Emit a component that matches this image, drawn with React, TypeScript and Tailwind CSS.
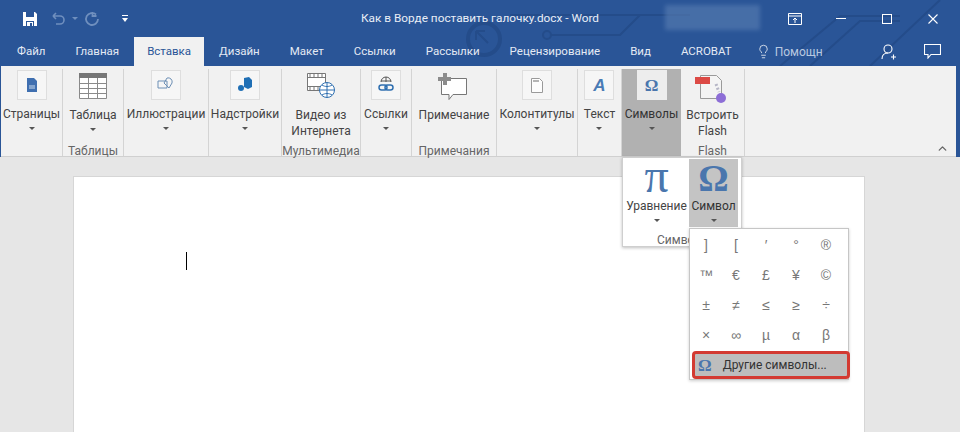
import type { ReactNode } from "react"
import { ChevronUp, Lightbulb } from "lucide-react"

const tabs = ["Файл", "Главная", "Вставка", "Дизайн", "Макет", "Ссылки", "Рассылки", "Рецензирование", "Вид", "ACROBAT"]

const symbols = ["]", "[", "′", "°", "®", "™", "€", "£", "¥", "©", "±", "≠", "≤", "≥", "÷", "×", "∞", "µ", "α", "β"]

function Caret() {
  return <div className="h-0 w-0 border-x-[3px] border-t-[3px] border-x-transparent border-t-[#555]" />
}

function IconBox({ children }: { children: ReactNode }) {
  return (
    <div className="flex h-[30px] w-[30px] items-center justify-center border border-[#dedede] bg-[#f6f6f6]">
      {children}
    </div>
  )
}

function RibbonGroup({ width, label, children }: { width: string; label?: string; children: ReactNode }) {
  return (
    <div className={`relative flex h-[87px] flex-col items-center border-r border-[#d4d4d4] ${width}`}>
      <div className="flex flex-1 flex-col items-center">{children}</div>
      {label && <div className="h-[12px] text-[12px] leading-[15px] text-[#666]">{label}</div>}
    </div>
  )
}

function SmallButton({ label, icon }: { label: string; icon: ReactNode }) {
  return (
    <div className="flex flex-col items-center pt-[1px]">
      <IconBox>{icon}</IconBox>
      <div className="mt-[6px] text-[12px] leading-[16px] whitespace-nowrap text-[#444]">{label}</div>
      <div className="mt-[5px]"><Caret /></div>
    </div>
  )
}

function Omega({ className }: { className: string }) {
  return <span className={`font-['Liberation_Serif',serif] font-bold text-[#4a76ad] ${className}`}>Ω</span>
}

function TitleBar() {
  return (
    <div className="relative grid h-[37px] grid-cols-[1fr_auto_1fr] items-center">
      <div className="flex items-center pl-[22px]">
        <svg width="16" height="16" viewBox="0 0 16 16" fill="none">
          <path d="M1 1h12l2 2v12H1z" fill="#fff" />
          <path d="M4 1h8v5H4zM4 10h8v5H4z" fill="#2a5597" />
          <path d="M5 11h6v4H5z" fill="#fff" />
          <path d="M8 12h2v3H8z" fill="#2a5597" />
        </svg>
        <svg className="ml-[13px]" width="30" height="16" viewBox="0 0 30 16" fill="none" stroke="#6f8fbe" strokeWidth="1.6">
          <path d="M2 5h7a4 4 0 0 1 0 8H5M2 5l3-3M2 5l3 3" />
          <path d="M21 6l3 3 3-3" fill="#6f8fbe" strokeWidth="0" />
        </svg>
        <svg className="ml-[3px]" width="16" height="16" viewBox="0 0 16 16" fill="none" stroke="#6f8fbe" strokeWidth="1.8">
          <path d="M12 3.500A6 6 0 1 0 14 8M8.500 1v4h4" />
        </svg>
        <svg className="ml-[21px]" width="8" height="10" viewBox="0 0 8 10" fill="#fff">
          <path d="M1 1h6v1H1zM1 4h6L4 8z" />
        </svg>
      </div>
      <div className="text-[11.8px] text-[#e9eef6]">Как в Ворде поставить галочку.docx - Word</div>
      <div className="flex items-center justify-end pr-[22px] text-white">
        <svg width="14" height="12" viewBox="0 0 14 12" fill="none" stroke="#fff">
          <path d="M.5.5h13v11H.5zM.5 3h13M7 10V5M5 7l2-2 2 2" />
        </svg>
        <div className="ml-[34px] h-px w-[10px] bg-white" />
        <div className="ml-[36px] h-[10px] w-[10px] border border-white" />
        <svg className="ml-[36px]" width="10" height="10" viewBox="0 0 10 10" stroke="#fff" strokeWidth="1.1">
          <path d="M.5.5l9 9M9.500.5l-9 9" />
        </svg>
      </div>
    </div>
  )
}

function TabBar() {
  return (
    <div className="relative flex h-[29px] items-stretch pl-[2px] text-[11.5px]">
      {tabs.map((tab) => (
        <div
          key={tab}
          className={
            tab === "Вставка"
              ? "flex items-center bg-[#f1f1f1] px-[13px] text-[#2a5597]"
              : "flex items-center px-[15px] text-[#e4eaf4]"
          }
        >
          {tab}
        </div>
      ))}
      <div className="ml-[9px] flex items-center text-[#b9c9e0]">
        <Lightbulb className="h-[15px] w-[15px] text-white" strokeWidth={1.2} />
        <span className="ml-[4px] text-[12px]">Помощн</span>
      </div>
      <div className="ml-auto flex items-center pr-[19px]">
        <svg width="16" height="16" viewBox="0 0 16 16" fill="none" stroke="#fff" strokeWidth="1.1">
          <circle cx="7" cy="5" r="4" />
          <path d="M1 15c0-4 2-6 6-6M10 13h5M12.500 10.500v5" />
        </svg>
        <svg className="ml-[27px]" width="17" height="15" viewBox="0 0 17 15" fill="none" stroke="#fff" strokeWidth="1.1">
          <path d="M.5.5h16v10H7L4 14v-3.500H.5z" />
        </svg>
      </div>
    </div>
  )
}

function Ribbon() {
  return (
    <div className="relative mr-[4px] ml-px flex h-[91px] border-b border-[#d0d0d0] bg-[#f1f1f1] pt-[3px]">
      <RibbonGroup width="w-[62px]">
        <SmallButton
          label="Страницы"
          icon={
            <svg width="14" height="16" viewBox="0 0 14 16">
              <path d="M2 1h7l3 3v11H2z" fill="#3f6fb0" />
              <path d="M4 9h6M4 11h6" stroke="#cde" strokeWidth="1" />
            </svg>
          }
        />
      </RibbonGroup>
      <RibbonGroup width="w-[61px]" label="Таблицы">
        <svg className="mt-[4px]" width="28" height="26" viewBox="0 0 28 26" fill="none" stroke="#8a8a8a">
          <path d="M.5.5h27v25H.5z" fill="#fff" />
          <path d="M0 0h28v5H0z" fill="#777" stroke="none" />
          <path d="M.5 10.500h27M.5 15.500h27M.5 20.500h27M9.500 5v20M18.500 5v20" />
        </svg>
        <div className="mt-[8px] text-[12px] leading-[16px] text-[#444]">Таблица</div>
        <div className="mt-[5px]"><Caret /></div>
      </RibbonGroup>
      <RibbonGroup width="w-[85px]">
        <SmallButton
          label="Иллюстрации"
          icon={
            <svg width="18" height="16" viewBox="0 0 18 16" fill="none" stroke="#6d8fb5">
              <path d="M1 4h9v7H1zM10 1a4 4 0 0 1 5 5l-3 5-5-5z" />
            </svg>
          }
        />
      </RibbonGroup>
      <RibbonGroup width="w-[73px]">
        <SmallButton
          label="Надстройки"
          icon={
            <svg width="16" height="16" viewBox="0 0 16 16" fill="#1f6fb5">
              <path d="M7 1l5-1 3 3v7l-4 2-4-2z" />
              <circle cx="4" cy="11" r="3" />
            </svg>
          }
        />
      </RibbonGroup>
      <RibbonGroup width="w-[79px]" label="Мультимедиа">
        <svg className="mt-[4px]" width="28" height="26" viewBox="0 0 28 26" fill="none" stroke="#777">
          <path d="M.5.5h18v17H.5z" fill="#fff" />
          <path d="M.5 4.500h18M.5 13.500h18M3 .5v4M7 .5v4M11 .5v4M15 .5v4M3 13.500v4M7 13.500v4M11 13.500v4" />
          <circle cx="20" cy="17" r="7.500" fill="#fff" stroke="#2f6fb0" />
          <path d="M12.500 17h15M20 9.500v15M15 12c3 2 7 2 10 0M15 22c3-2 7-2 10 0" stroke="#2f6fb0" />
        </svg>
        <div className="mt-[8px] text-center text-[12px] leading-[16px] text-[#444]">Видео из<br />Интернета</div>
      </RibbonGroup>
      <RibbonGroup width="w-[51px]">
        <SmallButton
          label="Ссылки"
          icon={
            <svg width="18" height="18" viewBox="0 0 18 18" fill="none" stroke="#555">
              <path d="M4 6a5 5 0 0 1 10 0M9 1v5M4 5h10" />
              <rect x="2" y="9" width="8" height="5" rx="2.500" stroke="#2f6fb0" strokeWidth="1.500" />
              <rect x="8" y="9" width="8" height="5" rx="2.500" stroke="#2f6fb0" strokeWidth="1.500" />
            </svg>
          }
        />
      </RibbonGroup>
      <RibbonGroup width="w-[85px]" label="Примечания">
        <svg className="mt-[4px]" width="32" height="28" viewBox="0 0 32 28" fill="none">
          <path d="M3.500 5.500h25v16H15l-4 5v-5H3.500z" fill="#fff" stroke="#777" />
          <path d="M0 4h5V0h4v4h4v4H9v4H5V8H0z" fill="#8c8c8c" />
        </svg>
        <div className="mt-[6px] text-[12px] leading-[16px] text-[#444]">Примечание</div>
      </RibbonGroup>
      <RibbonGroup width="w-[81px]">
        <SmallButton
          label="Колонтитулы"
          icon={
            <svg width="12" height="15" viewBox="0 0 12 15" fill="#fdfdfd" stroke="#9a9a9a">
              <path d="M.5.5h8l3 3v11H.5z" />
              <path d="M2 2h6v2H2z" fill="#b5b5b5" stroke="none" />
            </svg>
          }
        />
      </RibbonGroup>
      <RibbonGroup width="w-[44px]">
        <SmallButton
          label="Текст"
          icon={<span className="font-['Liberation_Sans',sans-serif] text-[17px] leading-none font-bold text-[#4a7bb5] italic">A</span>}
        />
      </RibbonGroup>
      <div className="flex h-[87px] w-[59px] flex-col items-center bg-[#b1b1b1] pt-[1px]">
        <div className="flex h-[30px] w-[30px] items-center justify-center bg-[#ededed]">
          <Omega className="text-[17px] leading-none" />
        </div>
        <div className="mt-[6px] text-[12px] leading-[16px] text-[#333]">Символы</div>
        <div className="mt-[5px]"><Caret /></div>
      </div>
      <RibbonGroup width="w-[64px]" label="Flash">
        <svg className="mt-[4px]" width="34" height="32" viewBox="0 0 34 32" fill="none">
          <path d="M5.500 2.500h16l5 5v18h-21z" fill="#f4f4f4" stroke="#9a9a9a" />
          <path d="M0 4h15v7H0z" fill="#dc4a45" />
          <circle cx="26" cy="25" r="5" fill="#8d6ed6" />
          <path d="M21 11l3 8" stroke="#b6b6c6" strokeWidth="3" strokeDasharray="2 2" />
        </svg>
        <div className="mt-[2px] text-center text-[12px] leading-[16px] text-[#444]">Встроить<br />Flash</div>
      </RibbonGroup>
      <ChevronUp className="absolute right-[7px] bottom-[1px] h-[13px] w-[13px] text-[#666]" strokeWidth={2.5} />
    </div>
  )
}

function SymbolsMenu() {
  return (
    <div className="absolute top-[157px] left-[622px] h-[90px] w-[120px] border border-[#cfcfcf] bg-white shadow-[0_1px_3px_rgba(0,0,0,0.25)]">
      <div className="flex h-[69px] px-[1px] pt-[1px]">
        <div className="flex w-[65px] flex-col items-center">
          <span className="h-[33px] font-['Liberation_Serif',serif] text-[48px] leading-[34px] text-[#4a76ad]">π</span>
          <div className="mt-[6px] text-[12px] leading-[16px] text-[#444]">Уравнение</div>
          <div className="mt-[5px]"><Caret /></div>
        </div>
        <div className="flex w-[49px] flex-col items-center bg-[#c4c4c4]">
          <Omega className="h-[33px] text-[38px] leading-[38px]" />
          <div className="mt-[6px] text-[12px] leading-[16px] text-[#333]">Символ</div>
          <div className="mt-[5px]"><Caret /></div>
        </div>
      </div>
      <div className="mt-[3px] pl-[34px] text-[12px] leading-[20px] whitespace-nowrap text-[#666]">Симво</div>
    </div>
  )
}

function SymbolPicker() {
  return (
    <div className="absolute top-[228px] left-[689px] h-[152px] w-[160px] border border-[#c6c6c6] bg-white pt-[1px] shadow-[0_1px_3px_rgba(0,0,0,0.2)]">
      <div className="grid grid-cols-[repeat(5,30px)] pl-[1px] font-['Liberation_Sans',sans-serif]">
        {symbols.map((symbol) => (
          <div key={symbol} className="flex h-[30px] items-center justify-center text-[14px] text-[#777]">
            {symbol}
          </div>
        ))}
      </div>
      <div className="mt-[1px] ml-[2px] flex h-[28px] w-[158px] items-center rounded-[4px] border-[3px] border-[#d33a32] bg-[#bdbdbd] pl-[3px]">
        <Omega className="text-[17px] leading-none" />
        <span className="ml-[11px] text-[12px] text-[#333]">Другие символы...</span>
      </div>
    </div>
  )
}

export default function App() {
  return (
    <div className="relative h-[432px] w-[960px] overflow-hidden bg-[#e6e6e6] font-['Roboto',sans-serif]">
      <div className="relative bg-[#2a5597]">
        <svg className="absolute top-0 left-[450px]" width="510" height="66" viewBox="0 0 510 66" fill="none" stroke="#244c8a" strokeWidth="2">
          <circle cx="34" cy="39" r="16" strokeWidth="4" />
          <path d="M26 31l12 12M26 31h9M26 31v9" />
          <path d="M100 35h70l20-20h50M60 15h160M330 66l60-50h60M360 66l50-45h40M420 66l70-66" />
          <circle cx="97" cy="35" r="4" />
        </svg>
        <div className="absolute top-[5px] left-[665px] h-[25px] w-[95px] bg-[#5a7fb3] opacity-60 blur-[2px]" />
        <TitleBar />
        <TabBar />
      </div>
      <div className="bg-[#2a5597]">
        <Ribbon />
      </div>
      <div className="pt-[19px] pl-[73px]">
        <div className="relative h-[300px] w-[792px] border border-[#d6d6d6] bg-white">
          <div className="absolute top-[75px] left-[112px] h-[18px] w-px bg-black" />
        </div>
      </div>
      <SymbolsMenu />
      <SymbolPicker />
    </div>
  )
}
